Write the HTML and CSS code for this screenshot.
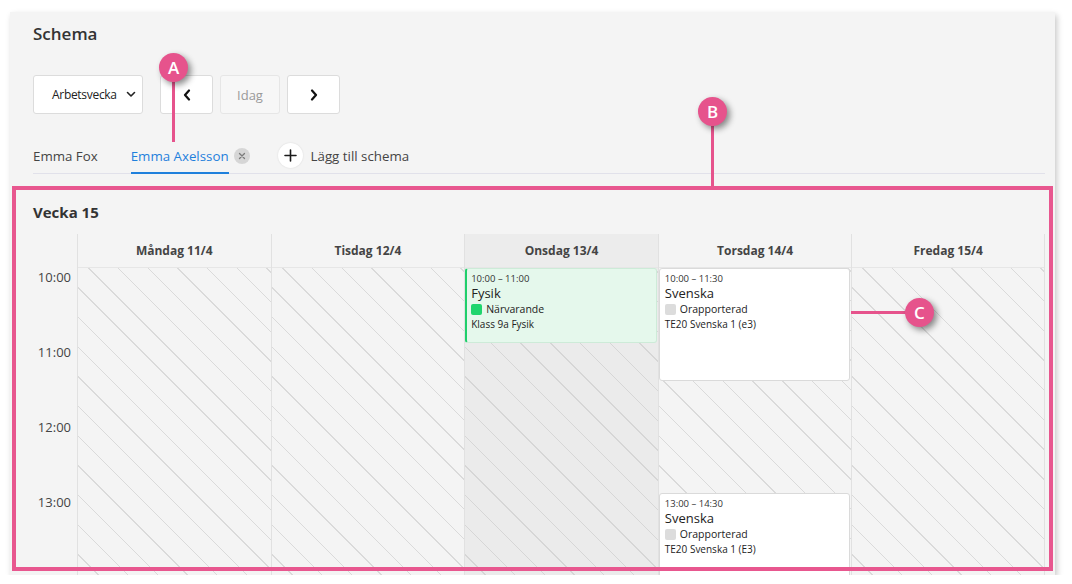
FILE: index.html
```html
<!DOCTYPE html>
<html lang="sv">
<head>
    <meta charset="UTF-8">
    <meta name="viewport" content="width=device-width, initial-scale=1.0">
    <title>Schema</title>
    <link rel="stylesheet" href="styles.css">
</head>
<body>
    <div class="panel">
        <h1 class="title">Schema</h1>

        <div class="toolbar">
            <button class="btn btn-select">Arbetsvecka
                <svg width="10" height="7" viewBox="0 0 10 7"><path d="M1.5 1.5 L5 5 L8.5 1.5" fill="none" stroke="#222" stroke-width="1.6" stroke-linecap="round" stroke-linejoin="round"/></svg>
            </button>
            <div class="nav">
                <button class="btn btn-arrow">
                    <svg width="8" height="12" viewBox="0 0 8 12"><path d="M6 1.5 L2 6 L6 10.5" fill="none" stroke="#111" stroke-width="2.2" stroke-linecap="round" stroke-linejoin="round"/></svg>
                </button>
                <button class="btn btn-today">Idag</button>
                <button class="btn btn-arrow">
                    <svg width="8" height="12" viewBox="0 0 8 12"><path d="M2 1.5 L6 6 L2 10.5" fill="none" stroke="#111" stroke-width="2.2" stroke-linecap="round" stroke-linejoin="round"/></svg>
                </button>
            </div>
        </div>

        <div class="tabs">
            <div class="tab">Emma Fox</div>
            <div class="tab tab-active">Emma Axelsson</div>
            <span class="chip-close">
                <svg width="8" height="8" viewBox="0 0 8 8"><path d="M1.5 1.5 L6.5 6.5 M6.5 1.5 L1.5 6.5" stroke="#7b7b7b" stroke-width="1.3" stroke-linecap="round"/></svg>
            </span>
            <div class="add-tab">
                <span class="add-circle">
                    <svg width="13" height="13" viewBox="0 0 13 13"><path d="M6.5 1 V12 M1 6.5 H12" stroke="#1a1a1a" stroke-width="1.6" stroke-linecap="round"/></svg>
                </span>
                Lägg till schema
            </div>
        </div>

        <h2 class="week-title">Vecka 15</h2>

        <div class="week">
            <div class="times">
                <div class="day-head"></div>
                <div class="time">10:00</div>
                <div class="time">11:00</div>
                <div class="time">12:00</div>
                <div class="time">13:00</div>
            </div>

            <div class="day">
                <div class="day-head">Måndag 11/4</div>
                <div class="day-body"></div>
            </div>
            <div class="day">
                <div class="day-head">Tisdag 12/4</div>
                <div class="day-body"></div>
            </div>
            <div class="day day-today">
                <div class="day-head">Onsdag 13/4</div>
                <div class="day-body">
                    <div class="event event-present slot-10-11">
                        <div class="ev-time">10:00 – 11:00</div>
                        <div class="ev-name">Fysik</div>
                        <div class="ev-status"><span class="dot dot-green"></span>Närvarande</div>
                        <div class="ev-group">Klass 9a Fysik</div>
                    </div>
                </div>
            </div>
            <div class="day">
                <div class="day-head">Torsdag 14/4</div>
                <div class="day-body">
                    <div class="event slot-10-1130">
                        <div class="ev-time">10:00 – 11:30</div>
                        <div class="ev-name">Svenska</div>
                        <div class="ev-status"><span class="dot dot-grey"></span>Orapporterad</div>
                        <div class="ev-group">TE20 Svenska 1 (e3)</div>
                    </div>
                    <div class="event slot-13-1430">
                        <div class="ev-time">13:00 – 14:30</div>
                        <div class="ev-name">Svenska</div>
                        <div class="ev-status"><span class="dot dot-grey"></span>Orapporterad</div>
                        <div class="ev-group">TE20 Svenska 1 (E3)</div>
                    </div>
                </div>
            </div>
            <div class="day day-last">
                <div class="day-head">Fredag 15/4</div>
                <div class="day-body"></div>
            </div>
        </div>
    </div>

    <!-- annotations -->
    <div class="mark-box"></div>
    <div class="pin pin-a"><span class="badge">A</span><span class="stem"></span></div>
    <div class="pin pin-b"><span class="badge">B</span><span class="stem"></span></div>
    <div class="pin-c"><span class="stem-h"></span><span class="badge">C</span></div>
</body>
</html>
```

FILE: styles.css
```css
body {
    margin: 0;
    background-color: #ffffff;
    font-family: 'Open Sans', 'Liberation Sans', sans-serif;
    color: #333;
}

.panel {
    margin: 12px 0 0 10px;
    width: 1045px;
    height: 563px;
    padding: 0 10px 0 23px;
    box-sizing: border-box;
    background-color: #f4f4f4;
    box-shadow: 2px 3px 6px rgba(0,0,0,0.22);
    overflow: hidden;
}

.title {
    margin: 0;
    padding-top: 10px;
    font-size: 17px;
    font-weight: 600;
    line-height: 24px;
    color: #333;
}

.toolbar {
    display: flex;
    gap: 17px;
    margin-top: 29px;
}

.nav {
    display: flex;
    gap: 7px;
}

.btn {
    height: 39px;
    background-color: #fff;
    border: 1px solid #dcdcdc;
    border-radius: 3px;
    font-family: inherit;
    font-size: 12px;
    color: #222;
    padding: 0;
    display: flex;
    align-items: center;
    justify-content: center;
}

.btn-select {
    width: 110px;
    justify-content: flex-start;
    padding-left: 18px;
    gap: 9px;
    letter-spacing: -0.3px;
}

.btn-arrow {
    width: 53px;
}

.btn-today {
    width: 60px;
    background-color: #f7f7f7;
    border-color: #e6e6e6;
    color: #9a9a9a;
    font-size: 13px;
}

.tabs {
    display: flex;
    align-items: center;
    margin-top: 24px;
    border-bottom: 1px solid #e1e1ea;
    font-size: 13.3px;
    color: #444;
}

.tab {
    padding: 8px 0 6px;
    line-height: 20px;
    border-bottom: 2px solid transparent;
    margin-bottom: -1px;
    margin-right: 33px;
}

.tab-active {
    color: #1f80dc;
    border-bottom-color: #1f80dc;
    margin-right: 5px;
}

.chip-close {
    width: 16px;
    height: 16px;
    border-radius: 50%;
    background-color: #d6d6d6;
    display: flex;
    align-items: center;
    justify-content: center;
    margin-right: 28px;
}

.add-tab {
    display: flex;
    align-items: center;
    gap: 8px;
}

.add-circle {
    width: 25px;
    height: 25px;
    border-radius: 50%;
    background-color: #fff;
    box-shadow: 0 0 2px rgba(0,0,0,0.12);
    display: flex;
    align-items: center;
    justify-content: center;
}

.week-title {
    margin: 27px 0 0;
    font-size: 15px;
    font-weight: 700;
    line-height: 22px;
    color: #333;
}

.week {
    display: grid;
    grid-template-columns: 44px repeat(5, 1fr);
    margin-top: 11px;
}

.day-head {
    height: 34px;
    line-height: 34px;
    text-align: center;
    font-size: 12px;
    font-weight: 700;
    color: #444;
    border-bottom: 1px solid #e6e6e6;
    box-sizing: border-box;
}

.times .day-head {
    border-bottom-color: transparent;
}

.time {
    height: 75px;
    line-height: 18px;
    text-align: right;
    padding-right: 6px;
    font-size: 13px;
    color: #444;
}

.day {
    border-left: 1px solid #e1e1e1;
}

.day-last {
    border-right: 1px solid #e1e1e1;
}

.day-body {
    display: grid;
    grid-template-rows: repeat(10, 37.5px);
    background-color: #f4f4f4;
    background-image: repeating-linear-gradient(45deg, transparent 0 20px, #dadada 20px 21px);
}

.day-today .day-head {
    background-color: #ececec;
}

.day-today .day-body {
    background-color: #ebebeb;
    background-image: repeating-linear-gradient(45deg, transparent 0 20px, #d6d6d6 20px 21px);
}

.event {
    margin: 0 1px 0 0;
    padding: 3px 5px 0;
    background-color: #fff;
    border: 1px solid #dadada;
    border-radius: 3px;
    color: #222;
    overflow: hidden;
}

.event-present {
    padding-left: 4px;
    background-color: #e5f8ec;
    border-color: #cdebd8;
    border-left: 2px solid #1fcf6b;
}

.slot-10-11 { grid-row: 1 / 3; }
.slot-10-1130 { grid-row: 1 / 4; }
.slot-13-1430 { grid-row: 7 / 10; }

.ev-time {
    font-size: 9.5px;
    line-height: 13px;
    color: #333;
}

.ev-name {
    font-size: 13px;
    line-height: 16px;
}

.ev-status {
    display: flex;
    align-items: center;
    gap: 4px;
    font-size: 10.5px;
    line-height: 16px;
}

.dot {
    width: 11px;
    height: 11px;
    border-radius: 2px;
}

.dot-green {
    background-color: #1fd56d;
}

.dot-grey {
    background-color: #dcdcdc;
}

.ev-group {
    font-size: 10px;
    line-height: 14px;
}

/* annotation layer */
.mark-box {
    position: absolute;
    left: 12px;
    top: 186px;
    width: 1041px;
    height: 385px;
    box-sizing: border-box;
    border: 4px solid #e8578f;
}

.badge {
    width: 29px;
    height: 29px;
    border-radius: 50%;
    background-color: #e6538c;
    color: #fff;
    font-size: 17px;
    font-weight: 600;
    line-height: 29px;
    text-align: center;
    box-shadow: 3px 3px 6px rgba(0,0,0,0.45);
    display: block;
    position: relative;
    z-index: 1;
}

.pin {
    position: absolute;
    display: flex;
    flex-direction: column;
    align-items: center;
}

.stem {
    width: 3px;
    background-color: #e6538c;
}

.pin-a {
    left: 159px;
    top: 53px;
}

.pin-a .stem {
    height: 60px;
}

.pin-b {
    left: 698px;
    top: 97px;
}

.pin-b .stem {
    height: 60px;
}

.pin-c {
    position: absolute;
    left: 851px;
    top: 298px;
    display: flex;
    align-items: center;
}

.stem-h {
    width: 56px;
    height: 3px;
    background-color: #e6538c;
    margin-right: -2px;
}
```
